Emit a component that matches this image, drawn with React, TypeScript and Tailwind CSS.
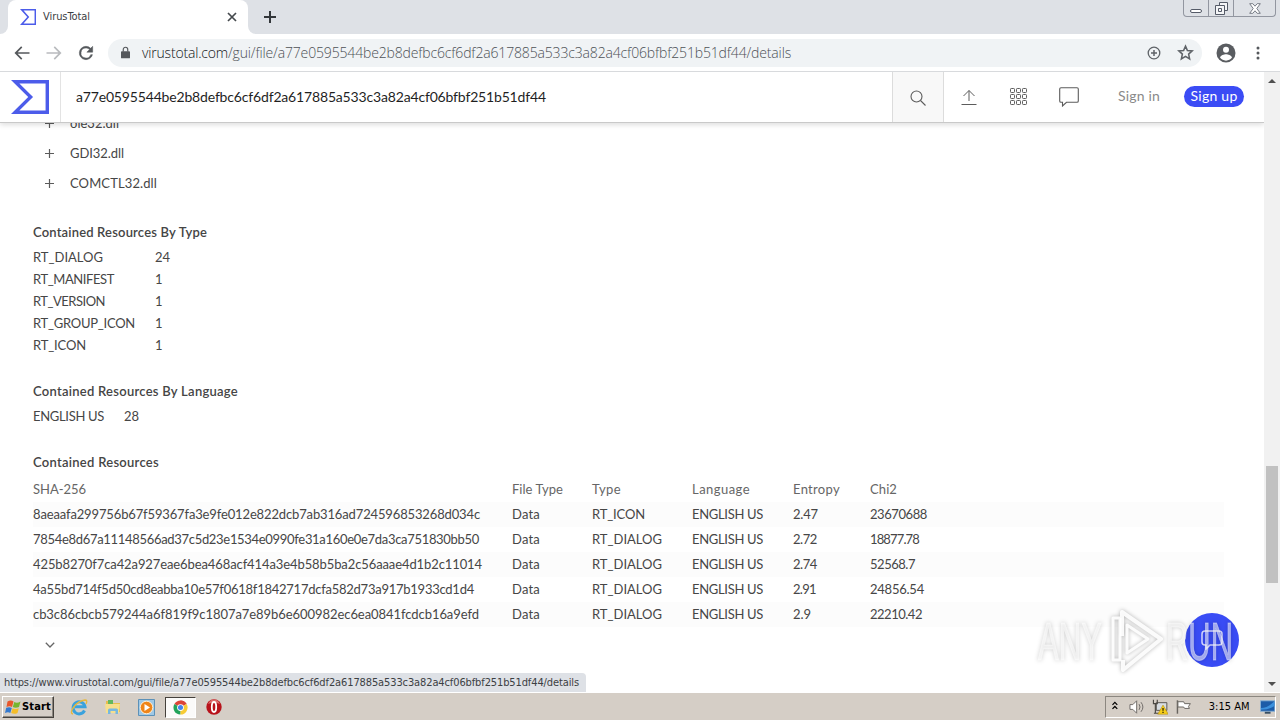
import { useLayoutEffect, useRef, useState } from "react";
import type { ReactNode } from "react";

/** One line of text whose tracking is adjusted so that it spans `w` pixels. */
function Fit({ w, className = "", children }: { w: number; className?: string; children: string }) {
  const ref = useRef<HTMLSpanElement>(null);
  const [spacing, setSpacing] = useState(0);
  useLayoutEffect(() => {
    if (ref.current) {
      const natural = ref.current.getBoundingClientRect().width;
      setSpacing((w - natural) / children.length);
    }
  }, [w, children]);
  return (
    <span ref={ref} className={`inline-block whitespace-pre ${className}`} style={{ letterSpacing: `${spacing}px` }}>
      {children}
    </span>
  );
}

const HASH = "a77e0595544be2b8defbc6cf6df2a617885a533c3a82a4cf06bfbf251b51df44";

function VtLogo({ className }: { className: string }) {
  return (
    <svg viewBox="0 0 100 89" preserveAspectRatio="none" className={className} fill="#4c5cea">
      <path fillRule="evenodd" d="M45.3 44.5 0 89h100V0H0l45.3 44.5zM91 80H22l36-35.2L22 9h69v71z" />
    </svg>
  );
}

function TabStrip() {
  return (
    <div className="flex h-[34px] items-start bg-[#dee1e6]">
      <div className="flex h-[34px] w-2 shrink-0 items-end bg-white">
        <div className="h-full w-2 rounded-br-lg bg-[#dee1e6]" />
      </div>
      <div className="flex h-[34px] w-60 items-center rounded-t-lg bg-white pr-[11px] pl-3">
        <VtLogo className="h-4 w-4" />
        <Fit w={47} className="mt-px ml-[7px] font-['DejaVu_Sans_Condensed','DejaVu_Sans',sans-serif] text-[11px] text-[#3c4043]">VirusTotal</Fit>
        <svg viewBox="0 0 10 10" className="ml-auto h-2.5 w-2.5" stroke="#45494d" strokeWidth="1.7">
          <path d="M1 1l8 8M9 1l-8 8" />
        </svg>
      </div>
      <div className="h-[34px] w-2 bg-white">
        <div className="h-full w-2 rounded-bl-lg bg-[#dee1e6]" />
      </div>
      <svg viewBox="0 0 12 12" className="mt-[11px] ml-2 h-3 w-3" stroke="#33373b" strokeWidth="2">
        <path d="M6 0v12M0 6h12" />
      </svg>
      <div className="mr-1 ml-auto flex h-[17px] w-[93px] rounded-b border border-t-0 border-[#9296a0]">
        <div className="flex w-[25px] items-end justify-center border-r border-[#9296a0] pb-[3px]">
          <div className="h-1 w-3 rounded-xs border border-[#555b68] bg-white" />
        </div>
        <div className="flex w-[25px] items-center justify-center border-r border-[#9296a0]">
          <svg viewBox="0 0 13 13" className="h-[13px] w-[13px]" fill="#f4f5f7" stroke="#555b68">
            <path d="M4.5.5h8v8h-8z" />
            <path d="M.5 3.500h9v9h-9z" />
            <path d="M3.500 6.500h3v3h-3z" />
          </svg>
        </div>
        <div className="flex flex-1 items-center justify-center">
          <svg viewBox="0 0 12 11" className="h-[11px] w-3" fill="#fff" stroke="#6b707b" strokeWidth=".9">
            <path d="M.7.7h3.100L6 3.200 8.200.7h3.100L7.800 5.500l3.500 4.800H8.200L6 7.800l-2.200 2.500H.7l3.500-4.800z" />
          </svg>
        </div>
      </div>
    </div>
  );
}

function Toolbar() {
  return (
    <div className="flex h-[38px] items-center border-b border-[#d8dadd] bg-white pl-3">
      <svg viewBox="0 0 24 24" className="h-5 w-5" fill="#55585c">
        <path d="M21 11H6.800l5.600-5.600L11 4l-8 8 8 8 1.400-1.400L6.800 13H21z" />
      </svg>
      <svg viewBox="0 0 24 24" className="ml-3 h-5 w-5" fill="#b9bbbe">
        <path d="M3 11h14.200l-5.600-5.600L13 4l8 8-8 8-1.400-1.400 5.600-5.600H3z" />
      </svg>
      <svg viewBox="0 0 24 24" className="ml-3 h-5 w-5" fill="#55585c">
        <path d="M17.650 6.350A7.960 7.960 0 0 0 12 4a8 8 0 1 0 7.730 10h-2.080A6 6 0 1 1 12 6c1.660 0 3.140.69 4.220 1.780L13 11h7V4z" stroke="#55585c" strokeWidth=".6" />
      </svg>
      <div className="ml-3 flex h-7 w-[1094px] items-center rounded-full bg-[#f0f3f5] pr-2 pl-[13px]">
        <svg viewBox="0 0 10 13" className="h-[13px] w-[9px]">
          <path d="M1 5h8a1 1 0 0 1 1 1v6a1 1 0 0 1-1 1H1a1 1 0 0 1-1-1V6a1 1 0 0 1 1-1z" fill="#55585c" />
          <path d="M2.500 5.500V3.200a2.500 2.500 0 0 1 5 0v2.300" fill="none" stroke="#55585c" strokeWidth="1.300" />
        </svg>
        <div className="ml-3 flex font-['Open_Sans',sans-serif] text-[14px] leading-6 font-light">
          <Fit w={86} className="text-[#111315]">virustotal.com</Fit>
          <Fit w={563} className="text-[#4d5156]">{`/gui/file/${HASH}/details`}</Fit>
        </div>
        <svg viewBox="0 0 14 14" className="ml-auto h-3.5 w-3.5" fill="none" stroke="#5f6368" strokeWidth="1.300">
          <circle cx="7" cy="7" r="5.800" />
          <path d="M7 4v6M4 7h6" strokeWidth="1.500" />
        </svg>
        <svg viewBox="0 0 24 24" className="ml-4 h-[17px] w-[17px]" fill="none" stroke="#5f6368" strokeWidth="2.200">
          <path d="M12 3l2.700 6.200 6.700.6-5 4.500 1.400 6.700L12 17.500 6.200 21l1.400-6.700-5-4.500 6.700-.6z" />
        </svg>
      </div>
      <svg viewBox="0 0 20 20" className="ml-3.5 h-5 w-5">
        <circle cx="10" cy="10" r="9.500" fill="#5a5d61" />
        <circle cx="10" cy="6.800" r="3" fill="#fff" />
        <path d="M4 14.500c.7-2.400 4-3.300 6-3.300s5.300.9 6 3.300a7.300 7.300 0 0 1-12 0z" fill="#fff" />
      </svg>
      <svg viewBox="0 0 4 14" className="ml-5 h-3.5 w-1" fill="#55585c">
        <circle cx="2" cy="2" r="1.500" />
        <circle cx="2" cy="7" r="1.500" />
        <circle cx="2" cy="12" r="1.500" />
      </svg>
    </div>
  );
}

function SiteHeader() {
  return (
    <header className="relative z-10 flex h-[51px] shrink-0 border-b border-[#c9c9c9] bg-white shadow-[0_2px_5px_rgba(0,0,0,0.13)]">
      <div className="flex w-[61px] items-center border-r border-[#e3e3e3] pl-[11px]">
        <VtLogo className="h-[34px] w-[38px]" />
      </div>
      <div className="flex flex-1 items-center pl-[15px]">
        <Fit w={470} className="text-[14px] leading-5 text-[#1f1f1f]">{HASH}</Fit>
      </div>
      <div className="flex w-[52px] items-center justify-center border-x border-[#dcdcdc] bg-[#f8f8f8] pt-px">
        <svg viewBox="0 0 16 16" className="h-4 w-4" fill="none" stroke="#5c5c5c" strokeWidth="1.100">
          <circle cx="6.500" cy="6.500" r="5.500" />
          <path d="M10.500 10.500l5 5" />
        </svg>
      </div>
      <div className="flex w-80 items-center pb-0.5 pl-[17px]">
        <svg viewBox="0 0 16 16" className="mt-0.5 h-4 w-4" fill="none" stroke="#5c5c5c" strokeWidth="1">
          <path d="M8 12V1.500M2.500 7L8 1.500 13.500 7M.5 15.500h15" />
        </svg>
        <svg viewBox="0 0 20 20" className="mt-px ml-8 h-5 w-5" fill="none" stroke="#5c5c5c" strokeWidth="1">
          {[1.5, 7.5, 13.5].map((y) => [1.5, 7.5, 13.5].map((x) => <rect key={`${x}-${y}`} x={x} y={y} width="4" height="4" rx=".8" />))}
        </svg>
        <svg viewBox="0 0 20 20" className="mt-px ml-[30px] h-5 w-5" fill="none" stroke="#5c5c5c" strokeWidth="1.100">
          <path d="M2 .7h16q1.300 0 1.300 1.300v12q0 1.300-1.300 1.300H7.500L3.500 19v-3.700H2Q.7 15.300.7 14V2Q.7.7 2 .7z" />
        </svg>
        <Fit w={42} className="ml-[39px] text-[14px] leading-5 text-[#8a8a8a]">Sign in</Fit>
        <div className="ml-6 flex h-[21px] w-[60px] items-center justify-center rounded-full bg-[#3b4cf5] text-white">
          <Fit w={47} className="text-[14px] leading-5">Sign up</Fit>
        </div>
      </div>
    </header>
  );
}

function Heading({ w, className, children }: { w: number; className: string; children: string }) {
  return (
    <h3 className={`flex h-5 items-center ${className}`}>
      <Fit w={w} className="font-semibold text-[#454545]">{children}</Fit>
    </h3>
  );
}

const IMPORTS: [string, number][] = [["ole32.dll", 49], ["GDI32.dll", 54], ["COMCTL32.dll", 87]];
const BY_TYPE: [string, number, string, number][] = [
  ["RT_DIALOG", 70, "24", 15],
  ["RT_MANIFEST", 81, "1", 7],
  ["RT_VERSION", 72, "1", 7],
  ["RT_GROUP_ICON", 102, "1", 7],
  ["RT_ICON", 53, "1", 7],
];
type Resource = { sha: string; shaW: number; type: string; typeW: number; entropy: string; entropyW: number; chi: string; chiW: number };
const RESOURCES: Resource[] = [
  { sha: "8aeaafa299756b67f59367fa3e9fe012e822dcb7ab316ad724596853268d034c", shaW: 447, type: "RT_ICON", typeW: 53, entropy: "2.47", entropyW: 25, chi: "23670688", chiW: 57 },
  { sha: "7854e8d67a11148566ad37c5d23e1534e0990fe31a160e0e7da3ca751830bb50", shaW: 446, type: "RT_DIALOG", typeW: 70, entropy: "2.72", entropyW: 24, chi: "18877.78", chiW: 49 },
  { sha: "425b8270f7ca42a927eae6bea468acf414a3e4b58b5ba2c56aaae4d1b2c11014", shaW: 449, type: "RT_DIALOG", typeW: 70, entropy: "2.74", entropyW: 24, chi: "52568.7", chiW: 45 },
  { sha: "4a55bd714f5d50cd8eabba10e57f0618f1842717dcfa582d73a917b1933cd1d4", shaW: 441, type: "RT_DIALOG", typeW: 70, entropy: "2.91", entropyW: 23, chi: "24856.54", chiW: 54 },
  { sha: "cb3c86cbcb579244a6f819f9c1807a7e89b6e600982ec6ea0841fcdcb16a9efd", shaW: 446, type: "RT_DIALOG", typeW: 70, entropy: "2.9", entropyW: 18, chi: "22210.42", chiW: 52 },
];

function TableRow({ className, cells }: { className: string; cells: ReactNode }) {
  return <div className={`grid h-[25px] grid-cols-[479px_80px_100px_101px_77px_1fr] items-center pb-0.5 ${className}`}>{cells}</div>;
}

function Details() {
  return (
    <main className="min-h-0 flex-1 overflow-hidden pr-8 pl-[33px] text-[13px] leading-5 text-[#464646]">
      <ul className="-mt-[15px]">
        {IMPORTS.map(([name, w]) => (
          <li key={name} className="flex h-[30px] items-center pl-3">
            <svg viewBox="0 0 9 9" className="h-[9px] w-[9px]" stroke="#5b5b5b" strokeWidth="1.2">
              <path d="M4.500 0v9M0 4.500h9" />
            </svg>
            <Fit w={w} className="ml-4">{name}</Fit>
          </li>
        ))}
      </ul>

      <Heading w={174} className="mt-6">Contained Resources By Type</Heading>
      <div className="mt-1">
        {BY_TYPE.map(([name, w, count, cw]) => (
          <div key={name} className="grid h-[22px] grid-cols-[122px_1fr] items-center">
            <div className="flex"><Fit w={w}>{name}</Fit></div>
            <div className="flex"><Fit w={cw}>{count}</Fit></div>
          </div>
        ))}
      </div>

      <Heading w={205} className="mt-[25px]">Contained Resources By Language</Heading>
      <div className="mt-1 grid h-[22px] grid-cols-[91px_1fr] items-center">
        <div className="flex"><Fit w={71}>ENGLISH US</Fit></div>
        <div className="flex"><Fit w={15}>28</Fit></div>
      </div>

      <Heading w={126} className="mt-[25px]">Contained Resources</Heading>
      <TableRow
        className="mt-[5px] text-[#666]"
        cells={
          <>
            <div className="flex"><Fit w={53}>SHA-256</Fit></div>
            <div className="flex"><Fit w={51}>File Type</Fit></div>
            <div className="flex"><Fit w={29}>Type</Fit></div>
            <div className="flex"><Fit w={58}>Language</Fit></div>
            <div className="flex"><Fit w={47}>Entropy</Fit></div>
            <div className="flex"><Fit w={27}>Chi2</Fit></div>
          </>
        }
      />
      <div className="pr-2">
        {RESOURCES.map((r) => (
          <TableRow
            key={r.sha}
            className="odd:bg-[#fcfcfc] even:bg-white"
            cells={
              <>
                <div className="flex"><Fit w={r.shaW}>{r.sha}</Fit></div>
                <div className="flex"><Fit w={28}>Data</Fit></div>
                <div className="flex"><Fit w={r.typeW}>{r.type}</Fit></div>
                <div className="flex"><Fit w={71}>ENGLISH US</Fit></div>
                <div className="flex"><Fit w={r.entropyW}>{r.entropy}</Fit></div>
                <div className="flex"><Fit w={r.chiW}>{r.chi}</Fit></div>
              </>
            }
          />
        ))}
      </div>
      <svg viewBox="0 0 10 6" className="mt-[15px] ml-3 h-1.5 w-2.5" fill="none" stroke="#666" strokeWidth="1.300">
        <path d="M.8.8L5 5 9.200.8" />
      </svg>
    </main>
  );
}

function Scrollbar() {
  return (
    <div className="flex w-4 flex-col items-center justify-between bg-[#f1f1f1] py-1.5">
      <svg viewBox="0 0 8 4" className="mt-px h-1 w-2" fill="#505050"><path d="M0 4l4-4 4 4z" /></svg>
      <div className="mt-[283px] h-[117px] w-3 bg-[#c1c1c1]" />
      <svg viewBox="0 0 8 4" className="h-1 w-2" fill="#505050"><path d="M0 0l4 4 4-4z" /></svg>
    </div>
  );
}

function Watermark() {
  return (
    <svg viewBox="1030 600 210 80" className="absolute right-10 bottom-3 h-20 w-[210px] drop-shadow-[0_0_2px_rgba(0,0,0,0.32)]">
      <g fill="#fff" fillOpacity=".55" stroke="#fff" strokeOpacity=".4" className="font-['Liberation_Sans_Narrow','Liberation_Sans',sans-serif]" fontSize="53">
        <text x="1038" y="660" textLength="64" lengthAdjust="spacingAndGlyphs">ANY</text>
        <text x="1166" y="660" textLength="67" lengthAdjust="spacingAndGlyphs">RUN</text>
      </g>
      <g fill="none" stroke="#fff" strokeOpacity=".9" strokeWidth="4" strokeLinejoin="round">
        <path d="M1122 636v-24l39 27-38 31v-10" />
        <path d="M1127 625l21 14-21 14z" strokeWidth="3" />
        <path d="M1120 618h-7v42h7V618" strokeWidth="3" />
      </g>
    </svg>
  );
}

function Taskbar() {
  return (
    <footer className="flex h-7 items-center border-t border-white bg-[#d5cec6] pt-px pr-1 pl-0.5 font-['DejaVu_Sans_Condensed','DejaVu_Sans',sans-serif] text-[11px] text-black">
      <div className="flex h-[22px] w-[52px] items-center border border-t-white border-r-[#45413c] border-b-[#45413c] border-l-white pl-0.5 shadow-[inset_-1px_-1px_0_#8c8780]">
        <svg viewBox="0 0 16 16" className="h-4 w-4">
          <path d="M2.500 2.500C5 1 7 1.500 8.500 2.500L7 8C5.500 7 3.500 7 1.500 8z" fill="#e8572b" />
          <path d="M9.300 3C11 4 13 4 15.500 2.500L14 8c-2 1-4.500 1-6.200 0z" fill="#76b52f" />
          <path d="M1.200 8.800C3.500 7.800 5.300 8 6.800 9L5.300 14C4 13 2 13 0 14z" fill="#3379cf" />
          <path d="M7.500 9.200c1.800 1 4 1 6.300 0L12.500 14c-2 1.200-4.500 1-6.300 0z" fill="#f4bd29" />
        </svg>
        <Fit w={29} className="ml-px font-bold">Start</Fit>
      </div>
      <svg viewBox="0 0 18 18" className="ml-4 h-[18px] w-[18px]" fill="none">
        <path d="M14.500 12.500A6 6 0 1 1 15 8.800H5" stroke="#3aa2dd" strokeWidth="3" />
        <path d="M3 16C-2 15 6 3 15 2q3 0 1 4" stroke="#e7b83c" strokeWidth="1.300" />
      </svg>
      <svg viewBox="0 0 18 18" className="ml-4 h-[18px] w-[18px]">
        <path d="M2 3h6l1 2h7v9H2z" fill="#e8bd4c" />
        <path d="M4 2h5v4H4z" fill="#62b85e" />
        <path d="M1 6h15l-1 9H2z" fill="#f6df8d" />
        <path d="M4 16v-4q0-1.500 1.500-1.500h7Q14 10.500 14 12v4h-2.500v-3h-5v3z" fill="#77b8df" />
      </svg>
      <svg viewBox="0 0 17 17" className="ml-4 h-[17px] w-[17px]">
        <path d="M.5.500h16v16H.5z" fill="#9fc8e5" stroke="#5c91b8" />
        <circle cx="8.500" cy="8.500" r="6.300" fill="#ef8519" stroke="#fff0d7" />
        <path d="M6.500 5l5.500 3.500L6.500 12z" fill="#fff" />
      </svg>
      <div className="ml-2.5 flex h-[21px] w-[31px] items-center justify-center border border-t-[#45413c] border-r-white border-b-white border-l-[#45413c] bg-[#fbfaf9]">
        <svg viewBox="0 0 16 16" className="h-[15px] w-[15px]">
          <path d="M8 8L1.500 4.200A7.500 7.500 0 0 1 14.500 4.200z" fill="#dc4437" />
          <path d="M8 .5a7.500 7.500 0 0 1 6.500 3.700H8z" fill="#dc4437" />
          <path d="M8 8l6.500-3.800A7.500 7.500 0 0 1 7.700 15.500z" fill="#f7cb35" />
          <path d="M8 8l-.3 7.500A7.500 7.500 0 0 1 1.500 4.200z" fill="#22a35a" />
          <circle cx="8" cy="8" r="3.600" fill="#fff" />
          <circle cx="8" cy="8" r="2.700" fill="#4383ec" />
        </svg>
      </div>
      <svg viewBox="0 0 16 16" className="ml-2.5 h-4 w-4">
        <circle cx="8" cy="8" r="7.700" fill="#b8131b" />
        <path d="M2 5Q4 .6 8 .6T14 5Q8 2 2 5z" fill="#dd6a6a" />
        <ellipse cx="8" cy="8" rx="2.200" ry="5" fill="#b8131b" stroke="#fff" strokeWidth="1.800" />
      </svg>
      <div className="ml-auto flex h-[22px] w-[171px] items-center border border-t-[#8c8780] border-r-white border-b-white border-l-[#8c8780] pl-1.5">
        <svg viewBox="0 0 6 9" className="mb-1 h-[9px] w-1.5" fill="none" stroke="#000" strokeWidth="1.300">
          <path d="M.5 3.800L3 1.300l2.500 2.500M.5 8L3 5.500 5.500 8" />
        </svg>
        <svg viewBox="0 0 17 16" className="ml-[11px] h-4 w-[17px]" fill="#fff" stroke="#6f6b67">
          <path d="M1 5.500h3L8 1.500v13L4 10.500H1z" />
          <path d="M10.500 5q2 3 0 6M12.500 3q4 5 0 10" fill="none" />
        </svg>
        <svg viewBox="0 0 17 16" className="ml-[7px] h-4 w-[17px]">
          <path d="M4.500 3.500h11v8h-11z" fill="#d8dde2" stroke="#57534d" />
          <path d="M1.500.5v4h4v-4M3.500 5v10M2 14.500h5" fill="none" stroke="#4b4843" strokeWidth="1.200" />
          <path d="M11.500 6L17 15.500H6z" fill="#f6ce19" stroke="#a27d0a" strokeWidth=".5" />
          <path d="M11.500 9v3M11.500 13v1.300" stroke="#292104" strokeWidth="1.300" />
        </svg>
        <svg viewBox="0 0 16 16" className="ml-2 h-4 w-4" fill="#fff" stroke="#68645f">
          <path d="M1.500 15V1" strokeWidth="1.500" />
          <path d="M2 2.500h6l1 2h6l-2 3 1 2H9l-1-1.500H2z" />
        </svg>
        <Fit w={41} className="ml-[17px]">3:15 AM</Fit>
        <svg viewBox="0 0 16 14" className="ml-2.5 h-3.5 w-4">
          <path d="M.5.500h15v11H.5z" fill="#1c5ca8" stroke="#8cb3d5" />
          <path d="M1 8Q8 8 15 1v5Q9 10 1 10z" fill="#3c91dd" />
          <path d="M5 12h6v2H5z" fill="#384f64" />
        </svg>
      </div>
    </footer>
  );
}

export default function App() {
  return (
    <div className="flex h-[720px] w-[1280px] flex-col overflow-hidden bg-white font-['Lato',sans-serif]">
      <TabStrip />
      <Toolbar />
      <div className="relative flex h-[620px]">
        <div className="flex w-[1264px] flex-col overflow-hidden">
          <SiteHeader />
          <Details />
        </div>
        <Scrollbar />
        <div className="absolute right-[41px] bottom-[25px] flex h-[54px] w-[54px] items-center justify-center rounded-full bg-[#394cf5]">
          <svg viewBox="0 0 22 20" className="h-5 w-[22px]" fill="none" stroke="#d6d9ff" strokeWidth="1.500">
            <path d="M4 1h14q3 0 3 3v8q0 3-3 3H9l-4 4v-4H4q-3 0-3-3V4q0-3 3-3z" />
          </svg>
        </div>
        <Watermark />
        <div className="absolute bottom-0 left-0 flex h-[19px] w-[586px] items-center rounded-tr bg-[#dee1e6] pt-px pl-1 text-[#3c4043]">
          <Fit w={575} className="font-['DejaVu_Sans_Condensed','DejaVu_Sans',sans-serif] text-[11px] leading-4">{`https://www.virustotal.com/gui/file/${HASH}/details`}</Fit>
        </div>
      </div>
      <Taskbar />
    </div>
  );
}
